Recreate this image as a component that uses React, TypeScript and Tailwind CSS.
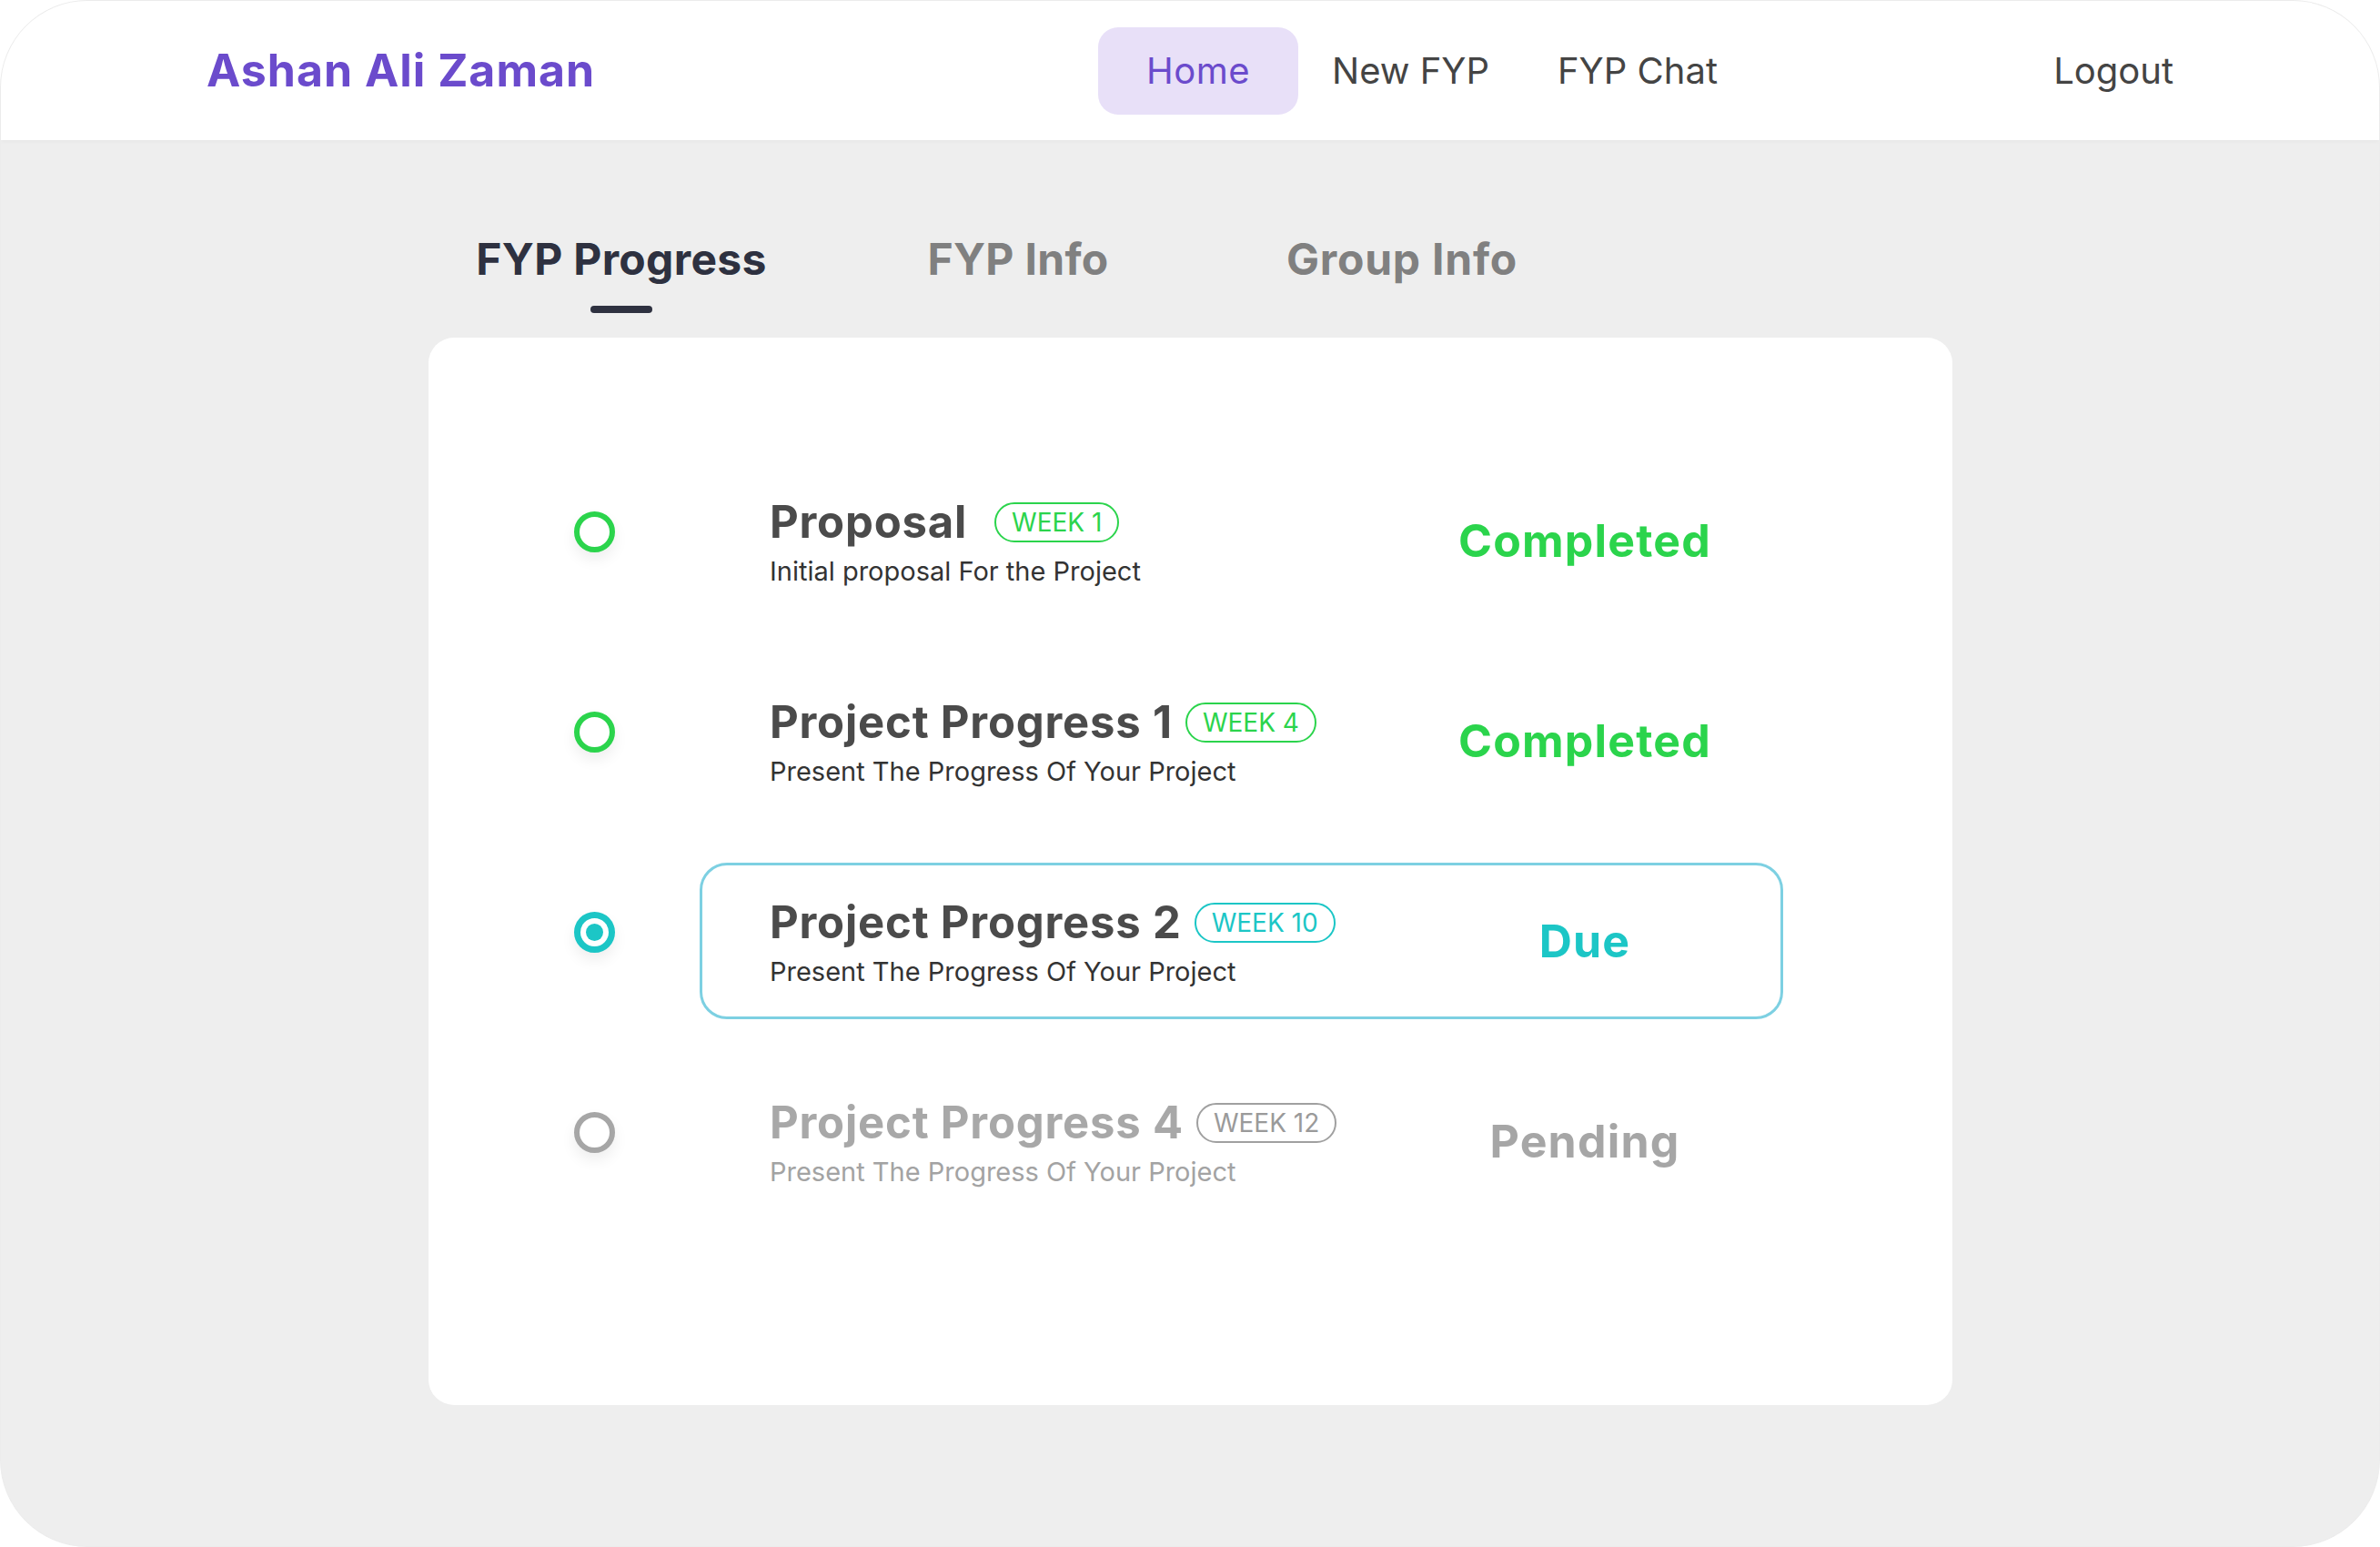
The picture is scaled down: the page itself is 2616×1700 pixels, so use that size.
import React from "react";

type Status = "done" | "due" | "pending";

interface Milestone {
  title: string;
  week: string;
  desc: string;
  status: Status;
  badgeGap: string;
}

const milestones: Milestone[] = [
  { title: "Proposal", week: "WEEK 1", desc: "Initial proposal For the Project", status: "done", badgeGap: "ml-[30px]" },
  { title: "Project Progress 1", week: "WEEK 4", desc: "Present The Progress Of Your Project", status: "done", badgeGap: "ml-[14px]" },
  { title: "Project Progress 2", week: "WEEK 10", desc: "Present The Progress Of Your Project", status: "due", badgeGap: "ml-[14px]" },
  { title: "Project Progress 4", week: "WEEK 12", desc: "Present The Progress Of Your Project", status: "pending", badgeGap: "ml-[14px]" },
];

// radio-like marker on the left of each row
function Marker({ status }: { status: Status }) {
  if (status === "due") {
    return (
      <div className="w-[45px] h-[45px] rounded-full border-[7px] border-[#1cc6c6] flex items-center justify-center bg-white shadow-[0_8px_16px_rgba(0,0,0,0.07)]">
        <div className="w-[19px] h-[19px] rounded-full bg-[#1cc6c6]" />
      </div>
    );
  }
  const ring = status === "done" ? "border-[#2bd44c]" : "border-[#a6a6a6]";
  return (
    <div
      className={`w-[45px] h-[45px] rounded-full border-[6px] bg-white shadow-[0_8px_16px_rgba(0,0,0,0.07)] ${ring}`}
    />
  );
}

function Row({ m }: { m: Milestone }) {
  const muted = m.status === "pending";
  const titleColor = muted ? "text-[#a8a8a8]" : "text-[#4b4b4b]";
  const descColor = muted ? "text-[#a3a3a3]" : "text-[#333333]";
  const badge =
    m.status === "done"
      ? "border-[#2bd44c] text-[#2bd44c]"
      : m.status === "due"
      ? "border-[#1cc6c6] text-[#1cc6c6]"
      : "border-[#a0a0a0] text-[#9a9a9a]";
  const statusText =
    m.status === "done" ? "Completed" : m.status === "due" ? "Due" : "Pending";
  const statusColor =
    m.status === "done"
      ? "text-[#2bd44c]"
      : m.status === "due"
      ? "text-[#1cc6c6]"
      : "text-[#a6a6a6]";

  return (
    <div className="flex items-center">
      <div className="mb-[20px]">
        <Marker status={m.status} />
      </div>
      <div
        className={`ml-[93px] w-[1191px] h-[172px] rounded-[30px] border-[3px] flex items-center pl-[74px] ${
          m.status === "due" ? "border-[#7dd0e2]" : "border-transparent"
        }`}
      >
        <div className="w-[746px] flex flex-col pt-[4px]">
          <div className="flex items-center h-[56px]">
            <span className={`text-[49px] leading-[56px] font-bold tracking-[0.8px] ${titleColor}`}>
              {m.title}
            </span>
            <span
              className={`${m.badgeGap} h-[44px] px-[17px] rounded-full border-2 flex items-center text-[28px] leading-none ${badge}`}
            >
              {m.week}
            </span>
          </div>
          <div className={`mt-[8px] text-[29px] leading-[36px] ${descColor}`}>{m.desc}</div>
        </div>
        <div className={`w-[300px] text-center text-[50px] font-bold tracking-[1.2px] ${statusColor}`}>
          {statusText}
        </div>
      </div>
    </div>
  );
}

export default function App() {
  return (
    <div
      className="w-[2616px] h-[1700px] bg-white"
      style={{ fontFamily: "Inter, 'Noto Sans', sans-serif" }}
    >
      <div className="w-full h-full rounded-[96px] overflow-hidden border border-[#ececec] bg-[#eeeeee] flex flex-col">
        {/* top bar */}
        <header className="h-[153px] shrink-0 bg-white flex items-center pl-[226px] pr-[226px] shadow-[0_2px_4px_rgba(0,0,0,0.03)]">
          <div className="w-[980px] shrink-0 text-[50px] font-bold text-[#6b4bcc] tracking-[1px]">
            Ashan Ali Zaman
          </div>
          <div className="w-[220px] h-[96px] rounded-[22px] bg-[#e8e0f8] flex items-center justify-center text-[40px] text-[#6b4bcc] tracking-[0.5px]">
            Home
          </div>
          <div className="ml-[37px] w-[248px] text-[40px] text-[#444444]">New FYP</div>
          <div className="text-[40px] text-[#444444]">FYP Chat</div>
          <div className="ml-auto text-[40px] text-[#444444]">Logout</div>
        </header>

        {/* tabs */}
        <div className="flex pt-[107px]">
          <div className="ml-[482px] w-[400px] flex flex-col items-center">
            <span className="text-[48px] leading-[48px] font-bold text-[#2e3140] tracking-[0.3px]">FYP Progress</span>
            <span className="mt-[27px] w-[68px] h-[8px] rounded-full bg-[#2e3140]" />
          </div>
          <div className="ml-[36px] w-[400px] flex flex-col items-center">
            <span className="text-[48px] leading-[48px] font-bold text-[#808080] tracking-[0.3px]">FYP Info</span>
          </div>
          <div className="ml-[22px] w-[400px] flex flex-col items-center">
            <span className="text-[48px] leading-[48px] font-bold text-[#808080] tracking-[0.8px]">Group Info</span>
          </div>
        </div>

        {/* progress card */}
        <div className="mt-[27px] ml-[470px] w-[1675px] h-[1173px] bg-white rounded-[28px] pt-[137px] pl-[160px] flex flex-col gap-[48px]">
          {milestones.map((m) => (
            <Row key={m.title} m={m} />
          ))}
        </div>
      </div>
    </div>
  );
}
